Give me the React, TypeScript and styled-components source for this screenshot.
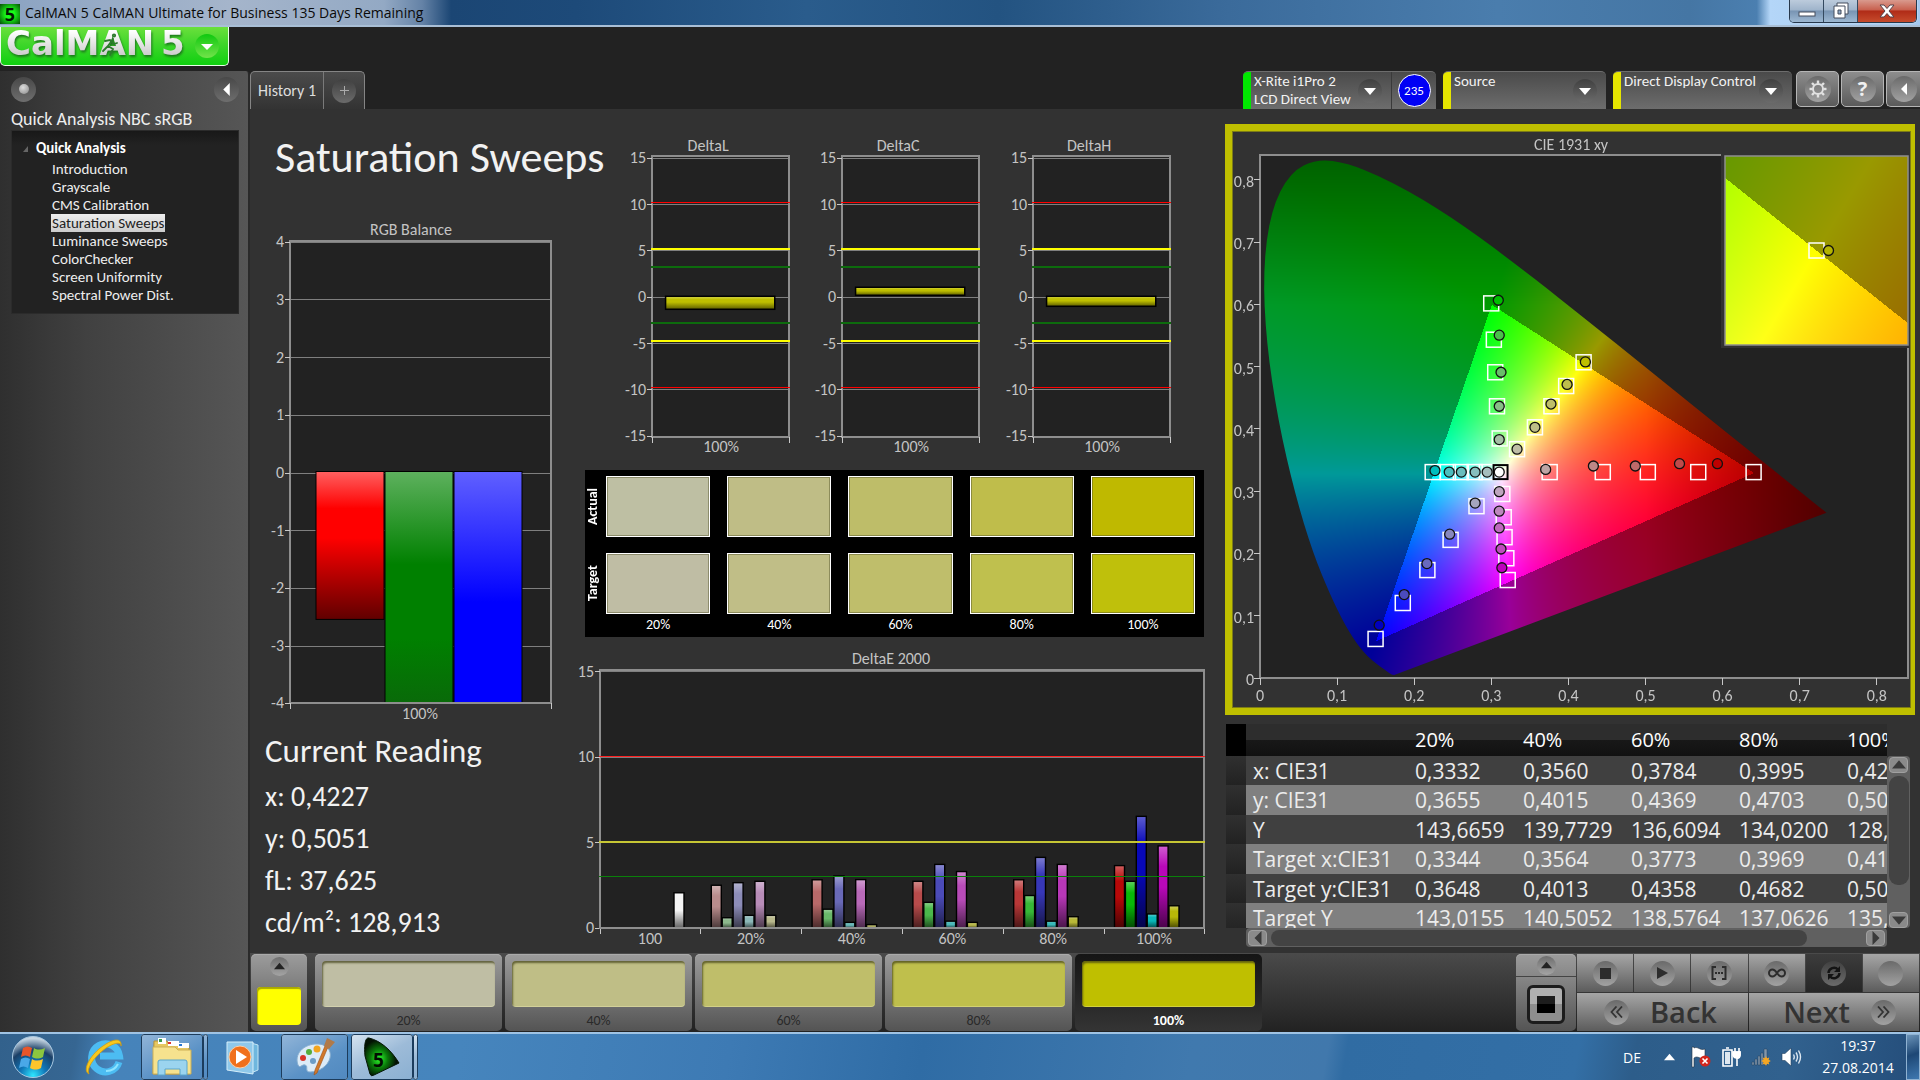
import React, { useEffect, useRef } from "react";
import styled, { createGlobalStyle, css } from "styled-components";

const UI = 'Carlito, Calibri, Lato, "Open Sans", sans-serif';
const SYSTEM = '"Segoe UI", "Open Sans", "Noto Sans", sans-serif';

const GlobalStyle = createGlobalStyle`
  *, *::before, *::after { box-sizing: border-box; }
  body { margin: 0; background: #222; color: #e6e6e6; font-family: ${UI}; font-size: 15px; }
  button { font: inherit; color: inherit; margin: 0; padding: 0; border: 0; background: none; cursor: pointer; }
  h1, h2, p, ul { margin: 0; padding: 0; font-weight: 400; }
  ul { list-style: none; }
  a { color: inherit; text-decoration: none; }
`;

const Page = styled.div`
  min-height: 100vh;
  display: flex;
  flex-direction: column;
  overflow: hidden;
`;

/* ---------- window title bar ---------- */

const TitleBar = styled.header`
  height: 27px;
  display: flex;
  align-items: stretch;
  justify-content: space-between;
  border-bottom: 2px solid #a9bfd6;
  background: linear-gradient(90deg, #8ba3c2 0, #a5b5cb 12%, #93a9c4 20%, #6482a6 22%, #1b4674 23.5%, #1d4a79 30%,
    #2a5c8c 42%, #235381 52%, #3b6b9b 64%, #4a7dad 78%, #4576a4 88%, #4b7fb0 91.5%, #b4d6f8 92.2%, #a4c8ee 100%);
`;

const WindowTitle = styled.div`
  display: flex;
  align-items: center;
  gap: 5px;
  color: #0a0a0a;
  font-family: ${SYSTEM};
  font-size: 14px;
  white-space: nowrap;
`;

const WindowIcon = styled.span`
  width: 20px;
  height: 20px;
  margin-top: 2px;
  display: grid;
  place-items: center;
  background: radial-gradient(circle, #19ff19 30%, #064d06 100%);
  color: #021a02;
  font: bold 18px/20px "Open Sans", sans-serif;
`;

const WindowButtons = styled.div`
  display: flex;
  align-self: flex-start;
  height: 23px;
  margin-right: 3px;
  border: 1px solid #26384c;
  border-top: 0;
  border-radius: 0 0 5px 5px;
  overflow: hidden;
  box-shadow: 0 0 0 1px #b8d5f2;
`;

const WindowButton = styled.button<{ $close?: boolean }>`
  width: ${(p) => (p.$close ? 58 : 34)}px;
  display: grid;
  place-items: center;
  border-right: 1px solid #34495f;
  background: ${(p) =>
    p.$close
      ? "linear-gradient(#d99a8e 0, #c8604e 45%, #b02b17 50%, #c64b2c 100%)"
      : "linear-gradient(#bccbdc 0, #9fb4cb 45%, #7894b3 50%, #9db8d2 100%)"};
  &:last-child { border-right: 0; }
`;

/* ---------- application header ---------- */

const AppHeader = styled.div`
  height: 44px;
  display: flex;
  align-items: flex-start;
  background: #222;
`;

const LogoButton = styled.button`
  display: flex;
  align-items: center;
  width: 229px;
  height: 39px;
  border: 1px solid #e9ffe9;
  border-top: 0;
  border-radius: 0 0 5px 5px;
  background: linear-gradient(#6be03c 0, #3ed62a 45%, #10d010 100%);
`;

const Workspace = styled.div`
  flex: 1;
  display: grid;
  grid-template-columns: 250px minmax(0, 1fr);
`;

/* ---------- sidebar ---------- */

const Sidebar = styled.aside`
  border-radius: 0 4px 0 0;
  border-right: 2px solid #2a2a2a;
  background: linear-gradient(90deg, #2f2f2f 0, #414141 35%, #565656 100%);
  padding: 5px 9px 0 11px;
`;

const SidebarTop = styled.div`
  display: flex;
  justify-content: space-between;
  align-items: center;
  height: 26px;
`;

const RoundButton = styled.button<{ $size?: number; $light?: boolean }>`
  width: ${(p) => p.$size ?? 24}px;
  height: ${(p) => p.$size ?? 24}px;
  flex: none;
  display: grid;
  place-items: center;
  border-radius: 50%;
  color: #fff;
  background: ${(p) => (p.$light ? "linear-gradient(#6e6e6e, #a4a4a4)" : "linear-gradient(#484848, #6e6e6e)")};
`;

const RecordDot = styled.span`
  width: 10px;
  height: 10px;
  border-radius: 50%;
  background: radial-gradient(circle at 40% 35%, #ddd, #888);
`;

const SidebarTitle = styled.h2`
  font-size: 18px;
  line-height: 24px;
  margin-top: 5px;
  color: #eee;
  white-space: nowrap;
`;

const Tree = styled.nav`
  margin-top: -1px;
  min-height: 184px;
  padding: 8px 6px 8px 11px;
  border: 1px solid #2b2b2b;
  background: linear-gradient(#181818, #222 14px);
`;

const TreeRoot = styled.div`
  display: flex;
  align-items: center;
  gap: 8px;
  margin-bottom: 2px;
  font-weight: 700;
  color: #fff;
  line-height: 19px;
`;

const TreeItem = styled.a<{ $active?: boolean }>`
  display: table;
  margin-left: 28px;
  padding: 0 1px;
  line-height: 18px;
  color: #eee;
  white-space: nowrap;
  ${(p) =>
    p.$active &&
    css`
      background: linear-gradient(#eee, #ccc);
      color: #222;
    `}
`;

/* ---------- main column ---------- */

const Main = styled.main`
  display: flex;
  flex-direction: column;
  min-width: 0;
`;

const TabBar = styled.div`
  height: 38px;
  display: flex;
  justify-content: space-between;
  background: #222;
  overflow: hidden;
`;

const Tabs = styled.div`
  display: flex;
  border: 1px solid #858585;
  border-bottom: 0;
  border-radius: 5px 5px 0 0;
  background: linear-gradient(#4b4b4b, #333);
  height: 38px;
`;

const Tab = styled.button<{ $w: number }>`
  width: ${(p) => p.$w}px;
  display: grid;
  place-items: center;
  font-size: 16px;
  white-space: nowrap;
  color: #ddd;
  & + & { border-left: 1px solid #7a7a7a; }
`;

const Tools = styled.div`
  display: flex;
  gap: 7px;
`;

const Device = styled.div<{ $w: number }>`
  width: ${(p) => p.$w}px;
  height: 38px;
  display: flex;
  border-radius: 5px 5px 0 0;
  background: linear-gradient(#4a4a4a, #6d6d6d);
  border-top: 1px solid #6d6d6d;
  overflow: hidden;
`;

const DeviceMain = styled.button<{ $color: string }>`
  flex: 1;
  display: flex;
  justify-content: space-between;
  border-left: 8px solid ${(p) => p.$color};
  padding: 0 9px 0 3px;
  text-align: left;
`;

const DeviceText = styled.span`
  line-height: 18px;
  font-size: 15px;
  color: #f2f2f2;
  white-space: nowrap;
`;

const Knob = styled.span<{ $light?: boolean; $size?: number }>`
  flex: none;
  align-self: center;
  width: ${(p) => p.$size ?? 24}px;
  height: ${(p) => p.$size ?? 24}px;
  border-radius: 50%;
  display: grid;
  place-items: center;
  background: ${(p) => (p.$light ? "linear-gradient(#6a6a6a, #a2a2a2)" : "linear-gradient(#404040, #6b6b6b)")};
`;

const Level = styled.button`
  width: 45px;
  display: grid;
  place-items: center;
  border-left: 1px solid #3a3a3a;
`;

const LevelBadge = styled.span`
  width: 33px;
  height: 33px;
  border-radius: 50%;
  border: 1px solid #fff;
  background: #0000f5;
  color: #fff;
  font-size: 13px;
  line-height: 31px;
  text-align: center;
`;

const SquareTools = styled.div`
  display: flex;
  gap: 2px;
  margin-left: -3px;
`;

const SquareTool = styled.button<{ $edge?: boolean }>`
  flex: none;
  width: ${(p) => (p.$edge ? 34 : 43)}px;
  height: 36px;
  display: grid;
  place-items: center;
  border: 1px solid #b5b5b5;
  border-right-width: ${(p) => (p.$edge ? 0 : 1)}px;
  border-radius: ${(p) => (p.$edge ? "5px 0 0 5px" : "5px")};
  background: linear-gradient(#8d8d8d, #5a5a5a);
  color: #f0f0f0;
  font: bold 20px/24px "Open Sans", sans-serif;
`;

const Content = styled.section`
  flex: 1;
  display: grid;
  grid-template-columns: 320fr 655fr 695fr;
  background: #323232;
`;

const Column = styled.div<{ $top?: number }>`
  min-width: 0;
  padding-top: ${(p) => p.$top ?? 0}px;
`;

const PageTitle = styled.h1`
  margin: 20px 0 30px 25px;
  font-size: 44px;
  line-height: 56px;
  color: #f2f2f2;
  white-space: nowrap;
`;

const Drawing = styled.svg`
  display: block;
  width: 100%;
  height: auto;
  font-family: ${UI};
  font-size: 16px;
  fill: #c4c4c4;
`;

const Readings = styled.div`
  padding: 4px 0 0 15px;
  color: #f2f2f2;
  white-space: nowrap;
`;

const ReadingsTitle = styled.h2`
  font-size: 33px;
  line-height: 44px;
  margin-bottom: 3px;
`;

const Reading = styled.p`
  font-size: 28px;
  line-height: 42px;
`;

const DeltaRow = styled.div`
  display: grid;
  grid-template-columns: repeat(3, 1fr);
  padding: 0 34px 0 50px;
`;

const SwatchPanel = styled.div`
  display: grid;
  grid-template-columns: 4px repeat(5, 1fr);
  column-gap: 17px;
  row-gap: 16px;
  margin: 9px 21px 8px 15px;
  padding: 6px 9px 2px 0;
  background: #000;
  color: #fff;
`;

const SwatchSide = styled.div`
  writing-mode: vertical-rl;
  transform: rotate(180deg);
  width: 16px;
  text-align: center;
  font-size: 14px;
  line-height: 16px;
  font-weight: 700;
`;

const Swatch = styled.div<{ $color: string }>`
  height: 61px;
  border: 1px solid #fff;
  background: ${(p) => p.$color};
  box-shadow: inset 0 0 0 1px rgba(80, 80, 40, 0.45);
`;

const SwatchLabel = styled.div`
  margin-top: -15px;
  font-size: 14px;
  line-height: 20px;
  text-align: center;
`;

const GamutPanel = styled.div`
  margin-right: 5px;
  border: solid #bfbf00;
  border-width: 7px 4px 7px 7px;
  box-shadow: inset 0 0 0 1px #7c7c16;
`;

const Stack = styled.div`
  display: grid;
  & > * { grid-area: 1 / 1; width: 100%; height: auto; }
`;

/* ---------- data table ---------- */

const GridArea = styled.div`
  display: grid;
  grid-template-columns: 20px minmax(0, 1fr) 23px;
  grid-template-rows: 204px 19px;
  margin: 9px 10px 0 1px;
`;

const RowHeads = styled.div`
  overflow: hidden;
`;

const RowHead = styled.div<{ $first?: boolean }>`
  height: ${(p) => (p.$first ? 32 : 29)}px;
  background: ${(p) => (p.$first ? "#000" : "linear-gradient(#303030, #222)")};
  &:nth-child(odd):not(:first-child) { height: 30px; }
`;

const TableView = styled.div`
  overflow: hidden;
`;

const DataTable = styled.table`
  border-collapse: collapse;
  table-layout: fixed;
  width: 702px;
  font-family: ${SYSTEM};
  font-size: 21px;
  line-height: 28px;
  color: #ececec;
  th, td {
    height: 29px;
    padding: 0 0 0 7px;
    font-weight: 400;
    text-align: left;
    white-space: nowrap;
  }
  thead th {
    height: 32px;
    font-size: 20px;
    color: #fff;
    background: linear-gradient(#2d2d2d 0, #2d2d2d 50%, #181818 50%, #111 100%);
  }
  tbody tr { background: #404040; }
  tbody tr:nth-child(even) { background: #808080; height: 30px; }
`;

const ScrollTrack = styled.div<{ $vertical?: boolean }>`
  display: flex;
  flex-direction: ${(p) => (p.$vertical ? "column" : "row")};
  align-items: center;
  justify-content: space-between;
  padding: ${(p) => (p.$vertical ? "1px 2px 0" : "1px 2px")};
  margin-top: ${(p) => (p.$vertical ? 32 : 0)}px;
  border-radius: 4px;
  background: #606060;
`;

const ScrollButton = styled.button`
  flex: none;
  width: 19px;
  height: 16px;
  display: grid;
  place-items: center;
  border: 1px solid #a0a0a0;
  border-radius: 4px;
  background: #8a8a8a;
`;

const ScrollThumb = styled.div<{ $vertical?: boolean }>`
  border-radius: 9px;
  background: #434343;
  ${(p) =>
    p.$vertical
      ? css`width: 20px; height: 109px; margin-bottom: 24px;`
      : css`height: 16px; flex: 0 1 536px; margin-right: auto; margin-left: 4px;`}
`;

/* ---------- bottom strip ---------- */

const Strip = styled.footer`
  height: 79px;
  display: flex;
  padding: 1px;
  background: linear-gradient(#4a4a4a, #222);
`;

const raised = css`
  border-radius: 5px;
  background: linear-gradient(#9c9c9c, #545454);
  box-shadow: inset 0 1px 0 #aaa;
`;

const SourceBox = styled.div`
  ${raised}
  width: 56px;
  margin-right: 8px;
  padding: 3px 6px 6px;
  display: flex;
  flex-direction: column;
  align-items: center;
  justify-content: space-between;
`;

const SourceColor = styled.button`
  width: 44px;
  height: 38px;
  border-radius: 4px;
  background: #ff0;
  box-shadow: inset 1px 2px 1px #a9a900;
`;

const Steps = styled.div`
  display: flex;
  gap: 3px;
  flex: 0 1 947px;
`;

const Step = styled.button<{ $active?: boolean }>`
  ${raised}
  flex: 1;
  display: flex;
  flex-direction: column;
  justify-content: space-between;
  padding: 7px 7px 0;
  font-size: 14px;
  color: #2a2a2a;
  ${(p) =>
    p.$active &&
    css`
      background: linear-gradient(#151515, #343434);
      box-shadow: none;
      color: #fff;
      font-weight: 700;
    `}
`;

const StepColor = styled.span<{ $color: string }>`
  height: 46px;
  width: 100%;
  border-radius: 4px;
  background: ${(p) => p.$color};
  box-shadow: inset 1px 2px 2px rgba(60, 60, 20, 0.7), inset 0 -1px 0 rgba(255, 255, 200, 0.3);
`;

const StepLabel = styled.span`
  width: 100%;
  line-height: 20px;
  text-align: center;
`;

const Spacer = styled.div`
  flex: 1;
`;

const PatternBox = styled.div`
  ${raised}
  width: 60px;
  display: grid;
  grid-template-rows: 23px 1fr;
  place-items: center;
  margin-right: 1px;
`;

const PatternButton = styled.button`
  width: 38px;
  height: 39px;
  display: grid;
  place-items: center;
  border: 3px solid #1c1c1c;
  border-radius: 6px;
  background: linear-gradient(#b0b0b0 50%, #8e8e8e 50%);
`;

const PatternWindow = styled.span`
  width: 18px;
  height: 17px;
  background: linear-gradient(#1d1d1d 50%, #000 50%);
`;

const PatternToggle = styled.div`
  width: 100%;
  height: 23px;
  display: grid;
  place-items: center;
  border-bottom: 1px solid #444;
`;

const Transport = styled.div`
  width: 342px;
  display: grid;
  grid-template-columns: repeat(6, 1fr);
  grid-template-rows: 38px 38px;
  gap: 1px;
`;

const TransportButton = styled.button<{ $wide?: boolean; $dark?: boolean; $side?: "start" | "end" }>`
  grid-column: span ${(p) => (p.$wide ? 3 : 1)};
  display: flex;
  align-items: center;
  justify-content: ${(p) => (p.$side ? `flex-${p.$side}` : "center")};
  padding: ${(p) => (p.$side === "start" ? "0 0 0 27px" : p.$side === "end" ? "0 23px 0 0" : 0)};
  gap: 21px;
  background: ${(p) => (p.$dark ? "linear-gradient(#3c3c3c, #262626)" : "linear-gradient(#a6a6a6, #5c5c5c)")};
  color: #333;
  font-family: ${SYSTEM};
  font-size: 29px;
  font-weight: 600;
  line-height: 36px;
`;

/* ---------- desktop taskbar ---------- */

const Taskbar = styled.footer`
  height: 48px;
  display: flex;
  align-items: stretch;
  border-top: 2px solid #9fc3e4;
  background: linear-gradient(100deg, #32618c 0, #366692 4%, #4683ba 6%, #4685bd 24%, #3d7ab4 38%, #2f6ca5 48%,
    #4079ae 62%, #4178ac 69%, #306ca3 70%, #336fa6 82%, #2d5d8a 85%, #31618e 93%, #244d7a 100%);
`;

const Apps = styled.div`
  display: flex;
  align-items: stretch;
  padding-left: 7px;
`;

const TaskButton = styled.button<{ $w: number; $open?: boolean; $active?: boolean; $after?: number }>`
  width: ${(p) => p.$w}px;
  margin-right: ${(p) => p.$after ?? 0}px;
  display: grid;
  place-items: center;
  ${(p) =>
    p.$open &&
    css`
      border: 1px solid #d3e5f5;
      outline: 1px solid #1c3c5c;
      outline-offset: -1px;
      border-radius: 3px;
      background: ${p.$active
        ? "linear-gradient(150deg, #d5e3f0, #9dbbd8 50%, #8bb0d2)"
        : "linear-gradient(150deg, #92b5d8, #5b92c6 60%, #5189c0)"};
    `}
`;

const Tray = styled.div`
  margin-left: auto;
  display: flex;
  align-items: center;
  color: #fff;
  font-family: ${SYSTEM};
  font-size: 14px;
`;

const TrayButton = styled.button<{ $w: number }>`
  width: ${(p) => p.$w}px;
  display: grid;
  place-items: center;
`;

const Clock = styled.time`
  width: 96px;
  margin-left: 4px;
  text-align: center;
  line-height: 22px;
  white-space: nowrap;
`;

const ShowDesktop = styled.button`
  width: 14px;
  align-self: stretch;
  border: 1px solid #8fb2d2;
  background: linear-gradient(160deg, #6b93b8, #1d4775 45%, #3f78b0);
`;

/* ---------- charts ---------- */

type Plot = { l: number; t: number; r: number; b: number };

type AxisProps = {
  w: number;
  h: number;
  plot: Plot;
  name: string;
  titleX: number;
  titleY: number;
  ticks: number[];
  y: (v: number) => number;
  xTicks: number[];
  xLabels: { x: number; text: string }[];
  xLabelY: number;
  children?: React.ReactNode;
};

function AxisChart(p: AxisProps) {
  const { l, t, r, b } = p.plot;
  return (
    <Drawing viewBox={`0 0 ${p.w} ${p.h}`} role="img" aria-label={p.name}>
      <text x={p.titleX} y={p.titleY} textAnchor="middle">{p.name}</text>
      <rect x={l} y={t} width={r - l} height={b - t} fill="#222" />
      <g shapeRendering="crispEdges" stroke="#7f7f7f" strokeWidth="1">
        {p.ticks.map((v) => (
          <line key={v} x1={l} x2={r} y1={p.y(v)} y2={p.y(v)} />
        ))}
      </g>
      <rect x={l} y={t} width={r - l} height={b - t} fill="none" stroke="#8e8e8e" strokeWidth="2" shapeRendering="crispEdges" />
      <g stroke="#c8c8c8" shapeRendering="crispEdges">
        {p.ticks.map((v) => (
          <line key={v} x1={l - 5} x2={l} y1={p.y(v)} y2={p.y(v)} />
        ))}
        {p.xTicks.map((x) => (
          <line key={x} x1={x} x2={x} y1={b} y2={b + 6} />
        ))}
      </g>
      {p.ticks.map((v) => (
        <text key={v} x={l - 6} y={p.y(v) + 5} textAnchor="end">{v}</text>
      ))}
      {p.xLabels.map((k) => (
        <text key={k.text} x={k.x} y={p.xLabelY} textAnchor="middle">{k.text}</text>
      ))}
      {p.children}
    </Drawing>
  );
}

function Shade({ id, light, base, dark }: { id: string; light: string; base: string; dark: string }) {
  return (
    <linearGradient id={id} x1="0" y1="0" x2="0" y2="1">
      <stop offset="0" stopColor={light} />
      <stop offset="0.25" stopColor={base} />
      <stop offset="0.45" stopColor={base} />
      <stop offset="1" stopColor={dark} />
    </linearGradient>
  );
}

function RgbBalance() {
  const y = (v: number) => (v === -4 ? 488 : 258 - v * 57.7);
  const bars = [
    { id: "rb", x: 66, v: -2.55, light: "#ff6060", base: "#ff0000", dark: "#600000" },
    { id: "gb", x: 135, v: -6.4, light: "#5eb15e", base: "#008000", dark: "#1c3a1c" },
    { id: "bb", x: 204, v: -9, light: "#6060ff", base: "#0000ff", dark: "#000060" },
  ];
  return (
    <AxisChart
      w={320} h={510} plot={{ l: 40, t: 26, r: 301, b: 488 }} name="RGB Balance" titleX={161} titleY={20}
      ticks={[4, 3, 2, 1, 0, -1, -2, -3, -4]} y={y} xTicks={[40, 301]} xLabels={[{ x: 170, text: "100%" }]} xLabelY={504}
    >
      <defs>
        {bars.map((b) => <Shade key={b.id} {...b} />)}
        <clipPath id="rgb-clip"><rect x="40" y="26" width="261" height="461" /></clipPath>
      </defs>
      <g clipPath="url(#rgb-clip)" stroke="#000">
        {bars.map((b) => (
          <rect key={b.id} x={b.x} y={256.5} width={68} height={-b.v * 58} fill={`url(#${b.id})`} />
        ))}
      </g>
    </AxisChart>
  );
}

function DeltaChart({ name, top, height }: { name: string; top: number; height: number }) {
  const y = (v: number) => 162 - v * 9.25;
  const limits = [
    { v: 10, c: "#ff0000" }, { v: -10, c: "#ff0000" },
    { v: 5, c: "#ffff00" }, { v: -5, c: "#ffff00" },
    { v: 3, c: "#0d6b0d" }, { v: -3, c: "#0d6b0d" },
  ];
  return (
    <AxisChart
      w={190} h={325} plot={{ l: 32, t: 21, r: 169, b: 301 }} name={name} titleX={88} titleY={16}
      ticks={[15, 10, 5, 0, -5, -10, -15]} y={y} xTicks={[32, 169]} xLabels={[{ x: 101, text: "100%" }]} xLabelY={316}
    >
      <defs><Shade id={`d-${name}`} light="#dada50" base="#bfbf00" dark="#5c5c00" /></defs>
      <g shapeRendering="crispEdges">
        {limits.map((k) => (
          <rect key={k.v} x={31} width={139} y={Math.round(y(k.v)) - 3} height={Math.abs(k.v) === 10 ? 1 : 2} fill={k.c} />
        ))}
      </g>
      <rect x={45.5} y={top} width={109} height={height} fill={`url(#d-${name})`} stroke="#000" strokeWidth="1.5" />
    </AxisChart>
  );
}

const tones = [165, 135, 105, 75, 8];
const hues = (s: number, m: number) => [
  `rgb(${m},${s},${s})`, `rgb(${s},${m},${s})`, `rgb(${s},${s},${m})`,
  `rgb(${s},${m},${m})`, `rgb(${m},${s},${m})`, `rgb(${m},${m},${s})`,
];
const barTones = [140, 105, 75, 55, 8];

const deltaE = [
  [2.5, 0.6, 2.65, 0.74, 2.73, 0.74],
  [2.82, 1.1, 3.05, 0.33, 2.83, 0.2],
  [2.73, 1.5, 3.72, 0.4, 3.3, 0.33],
  [2.82, 1.9, 4.13, 0.4, 3.72, 0.66],
  [3.65, 2.73, 6.53, 0.82, 4.8, 1.3],
];

function DeltaE() {
  const y = (v: number) => 283 - v * 17.1;
  const group = (i: number) => 30 + i * 100.8;
  const bars = [{ x: group(0) + 74, v: 2.06, c: "#f4f4f4" }];
  deltaE.forEach((vals, i) =>
    vals.forEach((v, k) => bars.push({ x: group(i + 1) + 10.5 + k * 10.9, v, c: hues(barTones[i], 184)[k] })),
  );
  return (
    <AxisChart
      w={655} h={303} plot={{ l: 30, t: 25, r: 634, b: 283 }} name="DeltaE 2000" titleX={321} titleY={19}
      ticks={[15, 10, 5, 0]} y={y} xTicks={[0, 1, 2, 3, 4, 5, 6].map(group)}
      xLabels={["100", "20%", "40%", "60%", "80%", "100%"].map((text, i) => ({ x: group(i) + 50, text }))} xLabelY={299}
    >
      <defs>
        <linearGradient id="sheen" x1="0" y1="0" x2="0" y2="1">
          <stop offset="0" stopColor="#fff" stopOpacity="0.35" />
          <stop offset="0.25" stopColor="#fff" stopOpacity="0" />
          <stop offset="0.5" stopColor="#000" stopOpacity="0" />
          <stop offset="1" stopColor="#000" stopOpacity="0.6" />
        </linearGradient>
      </defs>
      {bars.map((b, i) => (
        <g key={i}>
          <rect x={b.x} y={y(b.v)} width={10} height={b.v * 17.1} fill={b.c} />
          <rect x={b.x} y={y(b.v)} width={10} height={b.v * 17.1} fill="url(#sheen)" stroke="#000" strokeWidth="1.4" />
        </g>
      ))}
      <g shapeRendering="crispEdges">
        <rect x="29" y="282" width="606" height="2" fill="#8e8e8e" />
        <rect x="29" y="111" width="606" height="1" fill="#ff2020" />
        <rect x="29" y="196" width="606" height="2" fill="#c6c634" />
        <rect x="29" y="231" width="606" height="1" fill="#0a800a" />
      </g>
    </AxisChart>
  );
}

/* ---------- chromaticity diagram ---------- */

const locus: [number, number][] = [
  [0.1741, 0.005], [0.1714, 0.0051], [0.1689, 0.0069], [0.1644, 0.0109], [0.1566, 0.0177], [0.144, 0.0297],
  [0.1355, 0.0399], [0.1241, 0.0578], [0.1096, 0.0868], [0.0913, 0.1327], [0.0687, 0.2007], [0.0454, 0.295],
  [0.0235, 0.4127], [0.0082, 0.5384], [0.0039, 0.6548], [0.0139, 0.7502], [0.0389, 0.812], [0.0743, 0.8338],
  [0.1142, 0.8262], [0.1547, 0.8059], [0.1929, 0.7816], [0.2296, 0.7543], [0.2658, 0.7243], [0.3016, 0.6923],
  [0.3373, 0.6589], [0.3731, 0.6245], [0.4087, 0.5896], [0.4441, 0.5547], [0.4788, 0.5202], [0.5125, 0.4866],
  [0.5448, 0.4544], [0.5752, 0.4242], [0.6029, 0.3965], [0.627, 0.3725], [0.6658, 0.334], [0.6915, 0.3083],
  [0.726, 0.274], [0.7347, 0.2653],
];

const gamutPlot = { l: 28, t: 24, r: 676, b: 547 };
const zoomPlot = { l: 493, t: 25, r: 676, b: 214 };
const gx = (x: number) => 28 + x * 771;
const gy = (y: number) => 547 - y * 622.8;

/* Linear sRGB at full brightness; dimmed outside the display triangle. */
function colourAt(x: number, y: number): [number, number, number] {
  const yy = Math.max(y, 0.001);
  const X = x / yy;
  const Z = (1 - x - yy) / yy;
  const lin = [
    3.2406 * X - 1.5372 - 0.4986 * Z,
    -0.9689 * X + 1.8758 + 0.0415 * Z,
    0.0557 * X - 0.204 + 1.057 * Z,
  ];
  const inside = Math.min(...lin) >= 0;
  const peak = Math.max(...lin);
  let k = inside ? 255 : 153;
  if (x > 0.5) k *= 1 - (x - 0.5) * 2;
  if (y > 0.6) k *= 1 - (y - 0.6) * 1.55;
  const out = lin.map((c) => (k * Math.max(c, 0)) / peak);
  return [out[0], out[1], out[2]];
}

function paint(w: number, h: number, map: (i: number, j: number) => [number, number]) {
  const layer = document.createElement("canvas");
  layer.width = w;
  layer.height = h;
  const ctx = layer.getContext("2d")!;
  const img = ctx.createImageData(w, h);
  for (let j = 0; j < h; j++) {
    for (let i = 0; i < w; i++) {
      const c = colourAt(...map(i, j));
      const o = (j * w + i) * 4;
      img.data[o] = c[0];
      img.data[o + 1] = c[1];
      img.data[o + 2] = c[2];
      img.data[o + 3] = 255;
    }
  }
  ctx.putImageData(img, 0, 0);
  return layer;
}

const shades = [0, 1, 2, 3, 4].map((i) => hues(i === 4 ? 0 : tones[i], 190));
const W = 0.3306;
const targets: [number, number][] = [
  [0.3757, W], [0.4446, W], [0.503, W], [0.5684, W], [0.6402, W],
  [0.3109, 0.3846], [0.3074, 0.4363], [0.3051, 0.4909], [0.3033, 0.5432], [0.2999, 0.6015],
  [0.3334, 0.3674], [0.3566, 0.4025], [0.378, 0.4363], [0.3971, 0.4688], [0.4197, 0.5069],
  [0.2941, W], [0.2784, W], [0.2605, W], [0.2437, W], [0.224, W],
  [0.3143, 0.2955], [0.3161, 0.2581], [0.3172, 0.2261], [0.3195, 0.1923], [0.3213, 0.1573],
  [0.2808, 0.2759], [0.2472, 0.2218], [0.2171, 0.1733], [0.1852, 0.1204], [0.1499, 0.0627],
];
const actual: { hue: number; pts: [number, number][] }[] = [
  { hue: 0, pts: [[0.3705, 0.3349], [0.4324, 0.3404], [0.4868, 0.3404], [0.5441, 0.3441], [0.5933, 0.3441]] },
  { hue: 1, pts: [[0.3103, 0.3828], [0.3103, 0.4363], [0.3126, 0.4909], [0.3103, 0.5505], [0.3091, 0.6065]] },
  { hue: 5, pts: [[0.3334, 0.3674], [0.3566, 0.4025], [0.3774, 0.4399], [0.3983, 0.4713], [0.422, 0.5075]] },
  { hue: 3, pts: [[0.2946, W], [0.279, W], [0.2611, W], [0.2454, W], [0.2269, 0.333]] },
  { hue: 4, pts: [[0.3103, 0.2992], [0.3103, 0.2679], [0.3103, 0.2409], [0.3126, 0.2071], [0.3137, 0.177]] },
  { hue: 2, pts: [[0.279, 0.2808], [0.246, 0.231], [0.2165, 0.1837], [0.187, 0.1339], [0.1546, 0.0848]] },
];

function Gamut() {
  const ref = useRef<HTMLCanvasElement>(null);
  useEffect(() => {
    const ctx = ref.current?.getContext("2d");
    if (!ctx) return;
    const g = gamutPlot;
    ctx.fillStyle = "#222";
    ctx.fillRect(g.l, g.t, g.r - g.l, g.b - g.t);
    ctx.save();
    ctx.beginPath();
    const pts = locus.map(([x, y]) => [gx(x), gy(y)]);
    ctx.moveTo(pts[0][0], pts[0][1]);
    for (let i = 1; i < pts.length - 1; i++) {
      const [x, y] = pts[i];
      const [nx, ny] = pts[i + 1];
      ctx.quadraticCurveTo(x, y, (x + nx) / 2, (y + ny) / 2);
    }
    ctx.lineTo(pts[pts.length - 1][0], pts[pts.length - 1][1]);
    ctx.closePath();
    ctx.clip();
    ctx.drawImage(paint(g.r - g.l, g.b - g.t, (i, j) => [i / 771, (g.b - g.t - j) / 622.8]), g.l, g.t);
    ctx.restore();
    const z = zoomPlot;
    ctx.fillStyle = "#323232";
    ctx.fillRect(z.l - 4, z.t - 2, z.r - z.l + 5, z.b - z.t + 5);
    ctx.drawImage(
      paint(z.r - z.l, z.b - z.t, (i, j) => [0.4193 + (i - 91) * 0.00029, 0.5053 - (j - 94) * 0.00029]),
      z.l, z.t,
    );
  }, []);
  const ticks = [0, 1, 2, 3, 4, 5, 6, 7, 8];
  const name = (n: number) => (n === 0 ? "0" : `0,${n}`);
  return (
    <GamutPanel>
      <Stack>
        <canvas ref={ref} width={679} height={577} />
        <Drawing viewBox="0 0 679 577" role="img" aria-label="CIE 1931 xy">
          <text x="339" y="19" textAnchor="middle">CIE 1931 xy</text>
          <path d="M489 24H28V547H676V217" fill="none" stroke="#8e8e8e" strokeWidth="1.5" shapeRendering="crispEdges" />
          <rect x="493" y="25" width="183" height="189" fill="none" stroke="#8e8e8e" strokeWidth="1.5" />
          <g stroke="#c8c8c8" shapeRendering="crispEdges">
            {ticks.map((n) => <line key={`x${n}`} x1={gx(n / 10)} x2={gx(n / 10)} y1="547" y2="554" />)}
            {ticks.map((n) => <line key={`y${n}`} x1="22" x2="28" y1={gy(n / 10)} y2={gy(n / 10)} />)}
          </g>
          {ticks.map((n) => <text key={`a${n}`} x={gx(n / 10)} y="570" textAnchor="middle">{name(n)}</text>)}
          {ticks.map((n) => <text key={`b${n}`} x="22" y={gy(n / 10) + 7} textAnchor="end">{name(n)}</text>)}
          <g fill="none" stroke="#fff" strokeWidth="1.5">
            {targets.map(([x, y], i) => <rect key={i} x={gx(x) - 7.5} y={gy(y) - 7.5} width="15" height="15" />)}
            <rect x="577" y="112" width="15" height="15" />
          </g>
          <rect x={gx(0.312) - 7} y={gy(W) - 7} width="14" height="14" fill="none" stroke="#000" strokeWidth="2" />
          <g stroke="#111" strokeWidth="1.3">
            {actual.map((s) =>
              s.pts.map(([x, y], i) => (
                <circle key={`${s.hue}${i}`} cx={gx(x)} cy={gy(y)} r="5" fill={shades[i][s.hue]} />
              )),
            )}
            <circle cx={gx(0.3103)} cy={gy(W)} r="5" fill="#fff" />
            <circle cx="596.5" cy="119.5" r="5" fill="#b4b400" />
          </g>
        </Drawing>
      </Stack>
    </GamutPanel>
  );
}

/* ---------- small drawings ---------- */

const Triangle = ({ dir, size = 12, fill = "#fff" }: { dir: "up" | "down" | "left" | "right"; size?: number; fill?: string }) => {
  const d = { up: "M0 9L6 2L12 9Z", down: "M0 3L12 3L6 10Z", left: "M9 0V12L3 6Z", right: "M3 0V12L9 6Z" }[dir];
  return <svg width={size} height={size} viewBox="0 0 12 12"><path d={d} fill={fill} /></svg>;
};

const Gear = () => (
  <svg width="20" height="20" viewBox="0 0 20 20" fill="none" stroke="#e2e2e2">
    <circle cx="10" cy="10" r="5" strokeWidth="2" />
    {[0, 45, 90, 135, 180, 225, 270, 315].map((a) => (
      <path key={a} d="M10 1.500V4.500" strokeWidth="2.400" transform={`rotate(${a} 10 10)`} />
    ))}
  </svg>
);

const LogoSvg = styled.svg`
  filter: drop-shadow(1px 2px 1px #1c7a1c);
`;

const Logo = () => (
  <LogoSvg width="190" height="38" viewBox="0 0 190 38" aria-label="CalMAN 5">
    <defs>
      <linearGradient id="metal" x1="0" y1="0" x2="0" y2="1">
        <stop offset="0.2" stopColor="#fff" />
        <stop offset="1" stopColor="#bcbcbc" />
      </linearGradient>
    </defs>
    <g fontFamily='"DejaVu Sans", sans-serif' fontWeight="700" fontSize="34" fill="url(#metal)">
      <text x="5" y="28">CalMAN</text>
      <text x="160" y="28">5</text>
    </g>
    <g stroke="#2c7a2c" strokeWidth="1.800" fill="none" strokeLinecap="round">
      <path d="M112 12l-5 7 5 3-3 6M107 19l-5 5M104 14l5-1 4 4 3-1" />
      <circle cx="113" cy="8.500" r="1.200" />
    </g>
  </LogoSvg>
);

const StartOrb = () => (
  <svg width="44" height="44" viewBox="0 0 44 44">
    <defs>
      <radialGradient id="orb" cx="0.5" cy="0.95" r="0.9">
        <stop offset="0" stopColor="#2ee6ff" />
        <stop offset="0.35" stopColor="#1076b8" />
        <stop offset="0.7" stopColor="#1b3f66" />
        <stop offset="1" stopColor="#c5d5e2" />
      </radialGradient>
    </defs>
    <circle cx="22" cy="22" r="20.500" fill="url(#orb)" stroke="#a9c9e2" />
    <path d="M12 13c3-2 6-2 9 0l-2 9c-3-2-6-2-9 0z" fill="#e8562a" />
    <path d="M23 13c3 2 7 2 11 0l-2 9c-4 2-7 2-11 0z" fill="#8cc63f" />
    <path d="M10 24c3-2 6-2 9 0l-2 9c-3-2-6-2-9 0z" fill="#4aa8e8" />
    <path d="M21 24c3 2 7 2 11 0l-2 9c-4 2-7 2-11 0z" fill="#fdc52c" />
  </svg>
);

const BrowserIcon = () => (
  <svg width="42" height="40" viewBox="0 0 42 40" fill="none">
    <path d="M36 25a14 14 0 1 1 .5-6H17" stroke="#4cbcf2" strokeWidth="7" />
    <path d="M35 27a13 13 0 0 1-12 7" stroke="#8ee4ff" strokeWidth="2" />
    <path d="M6 37C-2 33 9 16 20 9 31 1 39 1 38 9c1-4-6-4-15 2C12 19 3 31 6 37z" fill="#f7c81e" stroke="#d79d0a" strokeWidth="0.800" />
  </svg>
);

const FolderIcon = () => (
  <svg width="42" height="40" viewBox="0 0 42 40">
    <path d="M3 4h13l2 4h20v29H2z" fill="#e7c860" stroke="#b4903a" />
    <path d="M7 1h8v6H7zM17 4h11v5H17zM27 6h11v5H27z" fill="#fff" />
    <path d="M8 2h3v3H8z" fill="#3a9a4a" /><path d="M17 5h3v2h-3z" fill="#d33" /><path d="M28 7h3v2h-3z" fill="#2a78d0" />
    <path d="M2 10h22l3 3h13v24H2z" fill="#f6e28e" stroke="#cdb057" />
    <path d="M7 38V25q0-2 2-2h25q2 0 2 2v13h-7v-6H14v6z" fill="#9bd4ef" stroke="#5ba6cc" />
  </svg>
);

const PlayerIcon = () => (
  <svg width="36" height="38" viewBox="0 0 36 38">
    <path d="M26 5l7 2v25l-7 3z" fill="#6fb7de" stroke="#c3e5f5" />
    <path d="M2 4h26v32L2 32z" fill="#8fc8ea" stroke="#d5eefa" />
    <circle cx="15" cy="19" r="11" fill="#f0701c" stroke="#fbd0aa" />
    <path d="M11 12v14l11-7z" fill="#fff" />
  </svg>
);

const PaintIcon = () => (
  <svg width="42" height="40" viewBox="0 0 42 40">
    <path d="M4 28C0 17 9 8 21 7c11-1 17 6 15 14s-11 14-20 14c-6 0-1-6-5-7-3-1-5 4-7 0z" fill="#dcebf7" stroke="#86aed0" />
    <circle cx="9" cy="21" r="3" fill="#d8332a" /><circle cx="15" cy="15" r="3" fill="#55ad3b" />
    <circle cx="23" cy="12" r="3.500" fill="#f3a51e" /><circle cx="19" cy="24" r="3" fill="#6c9cc6" />
    <path d="M34 10L23 36l-3 2 1-5L31 9z" fill="#d2782a" stroke="#99501a" strokeWidth="0.600" />
    <path d="M30 9L33 1l8 4-6 7z" fill="#b07a4a" />
  </svg>
);

const CalmanIcon = () => (
  <svg width="42" height="42" viewBox="0 0 42 42">
    <defs>
      <radialGradient id="glow" cx="0.420" cy="0.550" r="0.500">
        <stop offset="0" stopColor="#2dff2d" /><stop offset="0.5" stopColor="#0a7a0a" /><stop offset="1" stopColor="#031203" />
      </radialGradient>
    </defs>
    <path d="M8 2C4 1 3 10 4 20l5 18q1 3 4 1l25-12C30 14 20 5 8 2z" fill="url(#glow)" stroke="#051505" />
    <text x="12" y="31" fontFamily='"Open Sans", sans-serif' fontWeight="700" fontSize="19" fill="#020c02">5</text>
  </svg>
);

const columns = ["20%", "40%", "60%", "80%", "100%"];
const rows = [
  ["x: CIE31", "0,3332", "0,3560", "0,3784", "0,3995", "0,4227"],
  ["y: CIE31", "0,3655", "0,4015", "0,4369", "0,4703", "0,5051"],
  ["Y", "143,6659", "139,7729", "136,6094", "134,0200", "128,9130"],
  ["Target x:CIE31", "0,3344", "0,3564", "0,3773", "0,3969", "0,4193"],
  ["Target y:CIE31", "0,3648", "0,4013", "0,4358", "0,4682", "0,5053"],
  ["Target Y", "143,0155", "140,5052", "138,5764", "137,0626", "135,3390"],
];
const swatches = [
  { name: "Actual", colors: ["#bebfa3", "#bfbd86", "#bebd69", "#bfbd4b", "#bfb900"] },
  { name: "Target", colors: ["#bfbda4", "#c0be87", "#bfbe6b", "#bfc04e", "#bfc00b"] },
];
const pages = [
  "Introduction", "Grayscale", "CMS Calibration", "Saturation Sweeps", "Luminance Sweeps",
  "ColorChecker", "Screen Uniformity", "Spectral Power Dist.",
];

export default function App() {
  return (
    <Page>
      <GlobalStyle />
      <TitleBar>
        <WindowTitle><WindowIcon>5</WindowIcon>CalMAN 5 CalMAN Ultimate for Business 135 Days Remaining</WindowTitle>
        <WindowButtons>
          <WindowButton aria-label="Minimize">
            <svg width="18" height="14" viewBox="0 0 18 14"><rect x="1" y="8" width="16" height="4" fill="#fff" stroke="#444c5c" /></svg>
          </WindowButton>
          <WindowButton aria-label="Restore">
            <svg width="20" height="18" viewBox="0 0 20 18" fill="#fff" stroke="#444c5c">
              <path d="M6 1h11v11H6z" /><path d="M3 4h11v12H3z" /><path d="M7 8h3v4H7z" fill="#8fa8c4" />
            </svg>
          </WindowButton>
          <WindowButton $close aria-label="Close">
            <svg width="18" height="16" viewBox="0 0 18 16">
              <path d="M2 2h4l3 3.500L12 2h4l-5 6 5 6h-4l-3-3.500L6 14H2l5-6z" fill="#fff" stroke="#54424a" />
            </svg>
          </WindowButton>
        </WindowButtons>
      </TitleBar>

      <AppHeader>
        <LogoButton aria-label="CalMAN menu">
          <Logo />
          <svg width="28" height="28" viewBox="0 0 28 28">
            <defs><linearGradient id="lk" x1="0" y1="0" x2="0" y2="1"><stop offset="0" stopColor="#0fc80f" /><stop offset="1" stopColor="#72e34a" /></linearGradient></defs>
            <circle cx="16" cy="14" r="12" fill="url(#lk)" /><path d="M10 12h12l-6 6z" fill="#fff" />
          </svg>
        </LogoButton>
      </AppHeader>

      <Workspace>
        <Sidebar>
          <SidebarTop>
            <RoundButton $size={25} aria-label="Record"><RecordDot /></RoundButton>
            <RoundButton $size={25} aria-label="Collapse"><Triangle dir="left" size={13} /></RoundButton>
          </SidebarTop>
          <SidebarTitle>Quick Analysis NBC sRGB</SidebarTitle>
          <Tree aria-label="Workflow">
            <TreeRoot>
              <svg width="5" height="6" viewBox="0 0 5 6"><path d="M5 0V6H0Z" fill="#666" /></svg>
              Quick Analysis
            </TreeRoot>
            {pages.map((p) => (
              <TreeItem key={p} href="#" $active={p === "Saturation Sweeps"}>{p}</TreeItem>
            ))}
          </Tree>
        </Sidebar>

        <Main>
          <TabBar>
            <Tabs>
              <Tab $w={72}>History 1</Tab>
              <Tab $w={41} aria-label="Add tab">
                <Knob>
                  <svg width="9" height="9" viewBox="0 0 9 9"><path d="M4.500 0V9M0 4.500H9" stroke="#aaa" /></svg>
                </Knob>
              </Tab>
            </Tabs>
            <Tools>
              <Device $w={193}>
                <DeviceMain $color="#00e800">
                  <DeviceText>X-Rite i1Pro 2<br />LCD Direct View</DeviceText>
                  <Knob><Triangle dir="down" /></Knob>
                </DeviceMain>
                <Level><LevelBadge>235</LevelBadge></Level>
              </Device>
              <Device $w={163}>
                <DeviceMain $color="#e6e600"><DeviceText>Source</DeviceText><Knob><Triangle dir="down" /></Knob></DeviceMain>
              </Device>
              <Device $w={179}>
                <DeviceMain $color="#e6e600"><DeviceText>Direct Display Control</DeviceText><Knob><Triangle dir="down" /></Knob></DeviceMain>
              </Device>
              <SquareTools>
                <SquareTool aria-label="Settings"><Knob $light $size={26}><Gear /></Knob></SquareTool>
                <SquareTool aria-label="Help"><Knob $light $size={26}>?</Knob></SquareTool>
                <SquareTool $edge aria-label="Collapse panel"><Knob $light $size={26}><Triangle dir="left" /></Knob></SquareTool>
              </SquareTools>
            </Tools>
          </TabBar>

          <Content>
            <Column>
              <PageTitle>Saturation Sweeps</PageTitle>
              <RgbBalance />
              <Readings>
                <ReadingsTitle>Current Reading</ReadingsTitle>
                <Reading>x: 0,4227</Reading>
                <Reading>y: 0,5051</Reading>
                <Reading>fL: 37,625</Reading>
                <Reading>cd/m²: 128,913</Reading>
              </Readings>
            </Column>
            <Column $top={26}>
              <DeltaRow>
                <DeltaChart name="DeltaL" top={161} height={13} />
                <DeltaChart name="DeltaC" top={152} height={8} />
                <DeltaChart name="DeltaH" top={161} height={10} />
              </DeltaRow>
              <SwatchPanel>
                {swatches.map((s) => (
                  <React.Fragment key={s.name}>
                    <SwatchSide>{s.name}</SwatchSide>
                    {s.colors.map((c) => <Swatch key={c} $color={c} />)}
                  </React.Fragment>
                ))}
                <span />
                {columns.map((c) => <SwatchLabel key={c}>{c}</SwatchLabel>)}
              </SwatchPanel>
              <DeltaE />
            </Column>
            <Column $top={15}>
              <Gamut />
              <GridArea>
                <RowHeads>
                  <RowHead $first />
                  {rows.map((r) => <RowHead key={r[0]} />)}
                </RowHeads>
                <TableView>
                  <DataTable>
                    <colgroup>
                      <col width="162" />
                      {columns.map((c) => <col key={c} width="108" />)}
                    </colgroup>
                    <thead>
                      <tr><th aria-label="Value" />{columns.map((c) => <th key={c} scope="col">{c}</th>)}</tr>
                    </thead>
                    <tbody>
                      {rows.map(([head, ...vals]) => (
                        <tr key={head}><th scope="row">{head}</th>{vals.map((v, i) => <td key={i}>{v}</td>)}</tr>
                      ))}
                    </tbody>
                  </DataTable>
                </TableView>
                <ScrollTrack $vertical>
                  <ScrollButton aria-label="Scroll up"><Triangle dir="up" fill="#3a3a3a" size={14} /></ScrollButton>
                  <ScrollThumb $vertical />
                  <ScrollButton aria-label="Scroll down"><Triangle dir="down" fill="#3a3a3a" size={14} /></ScrollButton>
                </ScrollTrack>
                <span />
                <ScrollTrack>
                  <ScrollButton aria-label="Scroll left"><Triangle dir="left" fill="#3a3a3a" size={14} /></ScrollButton>
                  <ScrollThumb />
                  <ScrollButton aria-label="Scroll right"><Triangle dir="right" fill="#3a3a3a" size={14} /></ScrollButton>
                </ScrollTrack>
              </GridArea>
            </Column>
          </Content>

          <Strip>
            <SourceBox>
              <RoundButton $size={19} $light aria-label="Expand"><Triangle dir="up" fill="#222" size={11} /></RoundButton>
              <SourceColor aria-label="Source color" />
            </SourceBox>
            <Steps>
              {columns.map((c, i) => (
                <Step key={c} $active={i === 4}>
                  <StepColor $color={["#bfbea4", "#bfbe86", "#bfbe6a", "#bfbf4c", "#bfbf00"][i]} />
                  <StepLabel>{c}</StepLabel>
                </Step>
              ))}
            </Steps>
            <Spacer />
            <PatternBox>
              <PatternToggle>
                <RoundButton $size={19} $light aria-label="Patterns"><Triangle dir="up" fill="#222" size={11} /></RoundButton>
              </PatternToggle>
              <PatternButton aria-label="Window pattern"><PatternWindow /></PatternButton>
            </PatternBox>
            <Transport>
              <TransportButton aria-label="Stop"><Knob $light $size={25}><svg width="11" height="11"><rect width="11" height="11" fill="#2c2c2c" /></svg></Knob></TransportButton>
              <TransportButton aria-label="Play"><Knob $light $size={25}><svg width="12" height="14" viewBox="0 0 12 14"><path d="M1 1v12l11-6z" fill="#2c2c2c" /></svg></Knob></TransportButton>
              <TransportButton aria-label="Series">
                <Knob $light $size={25}>
                  <svg width="16" height="14" viewBox="0 0 16 14" fill="none" stroke="#2c2c2c" strokeWidth="2">
                    <path d="M5 1H1.500V13H5M11 1h3.500V13H11" /><path d="M4 7h8" strokeDasharray="2 1" />
                  </svg>
                </Knob>
              </TransportButton>
              <TransportButton aria-label="Continuous">
                <Knob $light $size={25}>
                  <svg width="18" height="10" viewBox="0 0 18 10" fill="none" stroke="#2c2c2c" strokeWidth="2">
                    <path d="M9 5C7 2 6 1.500 4.500 1.500a3.500 3.500 0 0 0 0 7C6 8.500 7 8 9 5s3-3.500 4.500-3.500a3.500 3.500 0 0 1 0 7C12 8.500 11 8 9 5z" />
                  </svg>
                </Knob>
              </TransportButton>
              <TransportButton $dark aria-label="Refresh">
                <Knob $size={25}>
                  <svg width="16" height="16" viewBox="0 0 16 16" fill="none" stroke="#141414" strokeWidth="2.500">
                    <path d="M2.500 8A5.500 5.500 0 0 1 12 4.500M13.500 8A5.500 5.500 0 0 1 4 11.500" />
                    <path d="M14 1v6H8zM2 15V9h6z" fill="#141414" stroke="none" />
                  </svg>
                </Knob>
              </TransportButton>
              <TransportButton aria-label="Extra"><Knob $light $size={25} /></TransportButton>
              <TransportButton $wide $side="start">
                <Knob $light $size={25}>
                  <svg width="13" height="12" viewBox="0 0 13 12" fill="none" stroke="#333" strokeWidth="1.800"><path d="M6.500 0.500L1.500 6l5 5.500M12 0.500L7 6l5 5.500" /></svg>
                </Knob>
                Back
              </TransportButton>
              <TransportButton $wide $side="end">
                Next
                <Knob $light $size={25}>
                  <svg width="13" height="12" viewBox="0 0 13 12" fill="none" stroke="#333" strokeWidth="1.800"><path d="M1 0.500L6 6l-5 5.500M6.500 0.500l5 5.500-5 5.500" /></svg>
                </Knob>
              </TransportButton>
            </Transport>
          </Strip>
        </Main>
      </Workspace>

      <Taskbar>
        <Apps>
          <TaskButton $w={52} $after={18} aria-label="Start"><StartOrb /></TaskButton>
          <TaskButton $w={54} $after={10} aria-label="Browser"><BrowserIcon /></TaskButton>
          <TaskButton $w={62} $open aria-label="Explorer"><FolderIcon /></TaskButton>
          <TaskButton $w={5} $open $after={15} aria-label="More explorer windows" />
          <TaskButton $w={40} $after={18} aria-label="Media player"><PlayerIcon /></TaskButton>
          <TaskButton $w={67} $open $after={3} aria-label="Paint"><PaintIcon /></TaskButton>
          <TaskButton $w={62} $open $active aria-label="CalMAN"><CalmanIcon /></TaskButton>
          <TaskButton $w={5} $open $active aria-label="More CalMAN windows" />
        </Apps>
        <Tray>
          <TrayButton $w={40}>DE</TrayButton>
          <TrayButton $w={34} aria-label="Hidden icons"><Triangle dir="up" size={11} /></TrayButton>
          <TrayButton $w={30} aria-label="Action center">
            <svg width="20" height="22" viewBox="0 0 20 22">
              <path d="M1 1v20h2V12c4-3 6 2 11 0V3C9 5 7 0 3 2V1z" fill="#fff" stroke="#234" strokeWidth="0.600" />
              <circle cx="14" cy="15" r="5.500" fill="#d3251c" /><path d="M11.500 12.500l5 5m0-5l-5 5" stroke="#fff" strokeWidth="1.600" />
            </svg>
          </TrayButton>
          <TrayButton $w={30} aria-label="Power">
            <svg width="20" height="22" viewBox="0 0 20 22" fill="none" stroke="#fff" strokeWidth="1.600">
              <path d="M2 4h9v16H2zM5 2h3" /><path d="M4 6h5v12H4z" fill="#dfe8f0" stroke="none" />
              <path d="M14 2v4m4-4v4M12 6h7v3q0 3-3 3.500V20" /><path d="M12 6h7v3q-1 3-3.500 3T12 9z" fill="#fff" />
            </svg>
          </TrayButton>
          <TrayButton $w={30} aria-label="Network">
            <svg width="20" height="20" viewBox="0 0 20 20">
              <path d="M1 15h2v3H1zM4 12h2v6H4zM7 9h2v9H7zM10 6h2v12h-2zM13 2h3v16h-3z" fill="#8397aa" stroke="#24425f" strokeWidth="0.500" />
              <path d="M15 9l1 2.200 2.300-.7-.7 2.300 2.200 1.200-2.200 1.200.7 2.300-2.300-.7-1 2.200-1-2.200-2.300.7.700-2.300-2.200-1.200 2.200-1.200-.7-2.300 2.300.7z" fill="#f5a623" />
            </svg>
          </TrayButton>
          <TrayButton $w={30} aria-label="Volume">
            <svg width="21" height="20" viewBox="0 0 21 20" fill="none" stroke="#dfe9f2" strokeWidth="1.400">
              <path d="M1 6.500h3L10 1v18l-6-5.500H1z" fill="#fff" stroke="#23425f" strokeWidth="0.600" />
              <path d="M12.500 7.500q1.500 2.500 0 5M15 5.500q3 4.500 0 9M17.500 3.500q4 6.500 0 13" />
            </svg>
          </TrayButton>
          <Clock>19:37<br />27.08.2014</Clock>
          <ShowDesktop aria-label="Show desktop" />
        </Tray>
      </Taskbar>
    </Page>
  );
}
